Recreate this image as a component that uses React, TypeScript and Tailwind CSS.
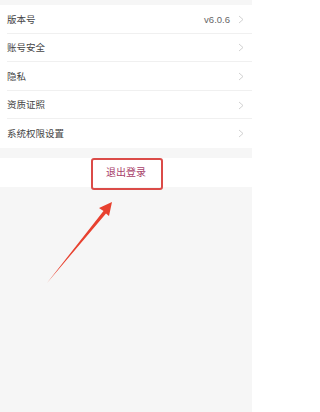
import React from "react";

const rows = [
  { label: "版本号", value: "v6.0.6" },
  { label: "账号安全" },
  { label: "隐私" },
  { label: "资质证照" },
  { label: "系统权限设置" },
];

function Chevron() {
  return (
    <svg width="6" height="9" viewBox="0 0 6 9" className="shrink-0">
      <path d="M1 1 L5 4.5 L1 8" fill="none" stroke="#cccccc" strokeWidth="0.9" />
    </svg>
  );
}

export default function App() {
  return (
    <div
      className="relative w-[252px] h-[412px] bg-[#f6f6f6] overflow-hidden"
      style={{ fontFamily: '"Noto Sans CJK SC", "Noto Sans", sans-serif' }}
    >
      <div className="pt-[5px]">
        <div className="bg-white">
          {rows.map((r, i) => (
            <div key={r.label} className="relative h-[28.6px] flex items-center pl-[7px] pr-[8px]">
              <span className="text-[9.5px] text-[#444] flex-1 leading-none">{r.label}</span>
              {r.value && (
                <span className="text-[9.5px] text-[#666] mr-[8px] leading-none" style={{ fontFamily: '"Liberation Sans", sans-serif' }}>
                  {r.value}
                </span>
              )}
              <Chevron />
              {i < rows.length - 1 && (
                <div className="absolute left-[7px] right-0 bottom-0 h-px bg-[#f0f0f0]" />
              )}
            </div>
          ))}
        </div>
      </div>
      <div className="mt-[10px] bg-white h-[29px] flex items-center justify-center">
        <span className="text-[10px] text-[#a8406a] leading-none">退出登录</span>
      </div>
      <div className="absolute left-[91px] top-[158px] w-[72px] h-[32px] border-2 border-[#db4b48] rounded-[3px]" />
      <svg className="absolute left-0 top-0" width="252" height="412" viewBox="0 0 252 412">
        <polygon
          points="112,202 99,208 103.5,211 47,283 106,213.5 109,216"
          fill="#e8412f"
        />
      </svg>
    </div>
  );
}
